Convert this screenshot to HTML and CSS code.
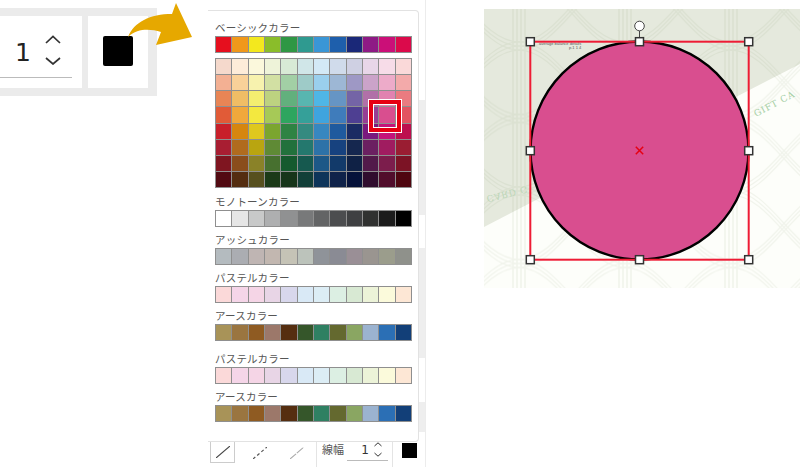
FILE: index.html
```html
<!DOCTYPE html>
<html lang="ja">
<head>
  <meta charset="UTF-8">
  <title>カラーパレット</title>
  <link rel="stylesheet" href="styles.css">
</head>
<body>
  <div class="figure">
    <div class="toolbar-col">
      <div class="toolbar-crop">
        <div class="crop-cell width-cell">
          <span class="width-value">1</span>
          <svg class="stepper" width="16" height="30" viewBox="0 0 16 30">
            <path d="M1 8 L8 1.5 L15 8 M1 23 L8 29 L15 23" fill="none" stroke="#333" stroke-width="1.7"/>
          </svg>
        </div>
        <div class="crop-cell color-cell">
          <div class="color-chip"></div>
        </div>
      </div>
    </div>

    <svg class="arrow" width="70" height="50" viewBox="125 0 70 50">
      <path d="M128 37 C134 22 150 14 172 14 L176 3 L192 37 L156 45 L161 32 C150 29 138 28 128 37 Z" fill="#e6a800"/>
    </svg>

    <div class="panel-col">
      <div class="panel">
        <div class="group">
          <div class="group-label">ベーシックカラー</div>
          <div class="swatches" data-palette="basic"></div>
        </div>
        <div class="swatch-grid" data-palette="tones">
          <div class="picked"></div>
        </div>
        <div class="group">
          <div class="group-label">モノトーンカラー</div>
          <div class="swatches" data-palette="mono"></div>
        </div>
        <div class="group">
          <div class="group-label">アッシュカラー</div>
          <div class="swatches" data-palette="ash"></div>
        </div>
        <div class="group">
          <div class="group-label">パステルカラー</div>
          <div class="swatches" data-palette="pastel"></div>
        </div>
        <div class="group">
          <div class="group-label">アースカラー</div>
          <div class="swatches" data-palette="earth"></div>
        </div>
        <div class="group group-split">
          <div class="group-label">パステルカラー</div>
          <div class="swatches" data-palette="pastel"></div>
        </div>
        <div class="group">
          <div class="group-label">アースカラー</div>
          <div class="swatches" data-palette="earth"></div>
        </div>
      </div>

      <div class="line-tools">
        <div class="line-btn active">
          <svg width="14" height="12" viewBox="0 0 14 12"><path d="M0 12 L14 0" stroke="#444" stroke-width="1.1"/></svg>
        </div>
        <div class="line-btn">
          <svg width="14" height="12" viewBox="0 0 14 12"><path d="M0 12 L14 0" stroke="#555" stroke-width="1.2" stroke-dasharray="3 2.5"/></svg>
        </div>
        <div class="line-btn">
          <svg width="14" height="12" viewBox="0 0 14 12"><path d="M0 12 L14 0" stroke="#aaa" stroke-width="1.1" stroke-dasharray="8 1"/></svg>
        </div>
        <div class="line-width">
          <span class="line-width-label">線幅</span>
          <div class="line-width-input">
            <span class="line-width-value">1</span>
            <svg class="line-stepper" width="8" height="15" viewBox="0 0 8 15">
              <path d="M.5 4 L4 .8 L7.5 4 M.5 11 L4 14.2 L7.5 11" fill="none" stroke="#333" stroke-width="1"/>
            </svg>
          </div>
        </div>
        <div class="line-color"><div class="line-chip"></div></div>
      </div>
    </div>

    <div class="panel-side"></div>

    <svg class="canvas" width="316" height="279" viewBox="484 9 316 279">
      <defs>
        <g id="ribbon">
          <path d="M-20 0 H0 C40 0 66 72.5 106 72.5 H126 M-20 72.5 H0 C40 72.5 66 0 106 0 H126" fill="none" stroke="#748c58" stroke-width="1.2"/>
        </g>
        <g id="braid">
          <use href="#ribbon"/>
          <use href="#ribbon" y="-4"/>
          <use href="#ribbon" y="4"/>
        </g>
        <pattern id="guilloche" x="519" y="46" width="106" height="72.5" patternUnits="userSpaceOnUse">
          <use href="#braid"/>
          <use href="#braid" y="-72.5"/>
          <use href="#braid" y="72.5"/>
          <path d="M2 0 V72.5 M6 0 V72.5 M100 0 V72.5 M104 0 V72.5" fill="none" stroke="#748c58" stroke-width="1.6"/>
        </pattern>
      </defs>
      <rect x="484" y="9" width="316" height="279" fill="#fdfefa"/>
      <path d="M484 9 H800 V64 L484 227 Z" fill="#e5e9dd"/>
      <rect x="484" y="9" width="316" height="279" fill="url(#guilloche)" opacity=".09"/>

      <text class="gift-text" transform="translate(756 117) rotate(-28)">GIFT CA</text>
      <text class="gift-text gift-flipped" transform="translate(486 196) rotate(-14) scale(1 -1)">CARD G</text>
      <text class="fine-print" x="539" y="45">average balance details</text>
      <text class="fine-print" x="569" y="49">p.1 1 4</text>

      <circle cx="639.5" cy="150.5" r="109" fill="#d94e8f" stroke="#000" stroke-width="2.4"/>

      <rect x="530.3" y="41.7" width="218.4" height="218" fill="none" stroke="#ee1c35" stroke-width="2"/>
      <path d="M635.8 146.8 L643.2 154.2 M643.2 146.8 L635.8 154.2" stroke="#e60012" stroke-width="1.5"/>
      <path d="M639.5 31 V38" stroke="#444" stroke-width="1"/>
      <circle cx="639.5" cy="26" r="4.8" fill="#fff" stroke="#444" stroke-width="1"/>
      <g fill="#fff" stroke="#333" stroke-width="1.5">
        <rect x="526.3" y="37.7" width="8" height="8"/>
        <rect x="635.5" y="37.7" width="8" height="8"/>
        <rect x="744.7" y="37.7" width="8" height="8"/>
        <rect x="526.3" y="146.7" width="8" height="8"/>
        <rect x="744.7" y="146.7" width="8" height="8"/>
        <rect x="526.3" y="255.7" width="8" height="8"/>
        <rect x="635.5" y="255.7" width="8" height="8"/>
        <rect x="744.7" y="255.7" width="8" height="8"/>
      </g>
    </svg>
  </div>

  <script src="palette.js"></script>
</body>
</html>
```

FILE: styles.css
```css
body {
  margin: 0;
  background-color: white;
  font-family: "Noto Sans CJK JP", "Noto Sans", sans-serif;
}
.figure {
  position: relative;
  display: flex;
  align-items: flex-start;
  width: 800px;
  height: 467px;
  overflow: hidden;
}

/* cropped toolbar on the left */
.toolbar-col {
  width: 208px;
  padding-top: 8px;
  flex-shrink: 0;
}
.toolbar-crop {
  display: flex;
  gap: 6px;
  box-sizing: border-box;
  width: 157px;
  height: 88px;
  padding: 8px 9px 8px 0;
  background-color: #ebebeb;
}
.crop-cell {
  background-color: white;
}
.width-cell {
  position: relative;
  display: flex;
  align-items: center;
  gap: 14px;
  box-sizing: border-box;
  width: 82px;
  padding: 0 0 0 15px;
}
.width-cell::after {
  content: "";
  position: absolute;
  left: 0;
  bottom: 10px;
  width: 72px;
  height: 1px;
  background-color: #bbb;
}
.width-value {
  font-family: "DejaVu Sans", sans-serif;
  font-size: 25px;
  line-height: 1;
  color: #222;
}
.stepper {
  margin-top: -5px;
}
.color-cell {
  display: flex;
  align-items: center;
  justify-content: center;
  width: 60px;
  padding-bottom: 3px;
  box-sizing: border-box;
}
.color-chip {
  width: 30px;
  height: 30px;
  border-radius: 2px;
  background-color: black;
}

.arrow {
  position: absolute;
  left: 125px;
  top: 0;
}

/* color picker panel */
.panel-col {
  width: 211px;
  padding-top: 10px;
  flex-shrink: 0;
}
.panel {
  display: flex;
  flex-direction: column;
  gap: 6px;
  box-sizing: border-box;
  width: 211px;
  height: 432px;
  padding: 10px 7px 0;
  background-color: white;
  border: 1px solid #e2e2e2;
  border-left: 0;
  border-radius: 0 4px 4px 0;
}
.group-label {
  height: 14px;
  margin-bottom: 1px;
  font-size: 10.5px;
  letter-spacing: 0.2px;
  line-height: 14px;
  color: #555;
  white-space: nowrap;
}
.group-split {
  margin-top: 5px;
}
.swatches,
.swatch-grid {
  display: grid;
  grid-template-columns: repeat(12, 1fr);
  gap: 1px;
  box-sizing: border-box;
  width: 197px;
  padding: 1px;
  background-color: #8f8f8f;
}
.swatches {
  height: 17px;
}
.swatch-grid {
  position: relative;
  grid-template-rows: repeat(8, 1fr);
  height: 130px;
  margin: -1px 0 1px;
}
.picked {
  position: absolute;
  left: 153px;
  top: 41px;
  box-sizing: border-box;
  width: 34px;
  height: 34px;
  border: 5px solid #e60012;
  outline: 1px solid white;
  outline-offset: -1px;
  box-shadow: inset 0 0 0 1px white;
}

/* line settings under the panel */
.line-tools {
  display: flex;
  align-items: flex-start;
  height: 25px;
  padding-left: 2px;
}
.line-btn {
  display: flex;
  align-items: center;
  justify-content: center;
  box-sizing: border-box;
  width: 25px;
  height: 21px;
  margin-right: 12px;
  flex-shrink: 0;
}
.line-btn.active {
  border: 1px solid #ccc;
  border-top: 0;
}
.line-width {
  display: flex;
  box-sizing: border-box;
  width: 77px;
  height: 25px;
  margin-left: -5px;
  padding-left: 5px;
  border-left: 1px solid #e4e4e4;
  border-right: 1px solid #e4e4e4;
  flex-shrink: 0;
}
.line-width-label {
  width: 25px;
  font-size: 11px;
  line-height: 14px;
  color: #555;
}
.line-width-input {
  display: flex;
  align-items: center;
  justify-content: flex-end;
  gap: 5px;
  box-sizing: border-box;
  width: 41px;
  height: 19px;
  padding-right: 6px;
  border-bottom: 1px solid #bbb;
}
.line-width-value {
  margin-top: -3px;
  font-family: "DejaVu Sans", sans-serif;
  font-size: 12px;
  color: #333;
}
.line-stepper {
  margin-top: -4px;
}
.line-color {
  padding: 1px 0 0 9px;
}
.line-chip {
  width: 15px;
  height: 15px;
  background-color: black;
}

/* slice of the app visible right of the panel */
.panel-side {
  box-sizing: border-box;
  width: 7px;
  height: 467px;
  border-right: 1px solid #ececec;
  flex-shrink: 0;
  background: linear-gradient(to bottom,
    white 0 100px,
    #eeeeee 100px 215px,
    white 215px 248px,
    #eeeeee 248px 358px,
    white 358px 402px,
    #eeeeee 402px 432px,
    white 432px);
}

/* selected circle on the gift card image */
.canvas {
  margin: 9px 0 0 58px;
  flex-shrink: 0;
}
.gift-text {
  font-family: "DejaVu Serif", serif;
  font-size: 9px;
  letter-spacing: 0.8px;
  fill: #a5cfa5;
}
.gift-flipped {
  fill: #bcd6b8;
}
.fine-print {
  font-family: "Liberation Sans", sans-serif;
  font-size: 4px;
  fill: #555;
}
```

FILE: palette.js
```js
const palettes = {
  basic: ['#e60f1e', '#f0981a', '#f3e81e', '#8abd2a', '#2f9744', '#2f9a90', '#3a96d6', '#1e5fac', '#1a2878', '#8e1a85', '#cb0f78', '#db0a4b'],
  tones: [
    '#f5d9cc', '#fdecd9', '#fbf8dc', '#eef3d9', '#d8ead6', '#d0e6e8', '#d3e9f6', '#d0dbeb', '#cfd0e3', '#e8d6e8', '#f7dce8', '#fad9d9',
    '#f3b093', '#f9d199', '#f7f2ae', '#d2e0a3', '#a2cfa5', '#9ecbc8', '#9acfed', '#9db7d5', '#9e98c5', '#cba3c9', '#edabc9', '#f3aaaa',
    '#e88555', '#f0bd65', '#f4ee70', '#bdd280', '#62b07d', '#58b6b0', '#4fb6e6', '#6695c4', '#7464a6', '#b170a8', '#e182b0', '#ea7b80',
    '#e15b37', '#f0a83c', '#f3e83f', '#a6c957', '#2ea55f', '#35a099', '#3fa4de', '#3f7cbb', '#4e3f92', '#973e94', '#d94e8f', '#e35461',
    '#c8202a', '#d6860f', '#dfc81e', '#7ba52f', '#2e8343', '#348a80', '#3787c0', '#1f5a9e', '#1a2b63', '#7a1a7e', '#c4137a', '#bd0f4e',
    '#a81e32', '#b06b1e', '#b9a510', '#5f8a35', '#22713c', '#24786e', '#2d72a8', '#17427f', '#15274f', '#6b2061', '#a01c60', '#9a1d32',
    '#7f1520', '#8a4d1c', '#8a8228', '#47702f', '#155a2e', '#16594f', '#1d5887', '#123a6a', '#0f2145', '#521a4a', '#7c1d4c', '#7c1325',
    '#520a12', '#542d10', '#57501f', '#1b3a18', '#17351a', '#123f38', '#0e355a', '#10234a', '#06123a', '#300d2e', '#520e2c', '#4f0610'
  ],
  mono: ['#ffffff', '#e6e6e6', '#c8c9c9', '#aeafb0', '#909192', '#78797a', '#636465', '#4c4d4f', '#3f4042', '#303130', '#1c1c1c', '#000000'],
  ash: ['#b4bbbf', '#abadb2', '#bfb5b3', '#c2b7b0', '#c5c3b6', '#bcc3bb', '#8f9399', '#8a8b94', '#9a8f96', '#9a9590', '#9b9d8c', '#8f918b'],
  pastel: ['#fbd9d9', '#f5d5e8', '#f5d5e6', '#e8d5e6', '#d8d7ec', '#d9e9f6', '#dcedf5', '#dcefe3', '#d8e9d3', '#ecf3d8', '#fbfadb', '#fde7d5'],
  earth: ['#a89358', '#9a7540', '#8f5b22', '#9c786a', '#552e10', '#35562a', '#2f8062', '#64692f', '#8aa662', '#9bb3d0', '#2b6fb5', '#123f78']
};

document.querySelectorAll('[data-palette]').forEach(function(row) {
  const first = row.firstElementChild;
  palettes[row.dataset.palette].forEach(function(color) {
    const cell = document.createElement('div');
    cell.style.backgroundColor = color;
    row.insertBefore(cell, first);
  });
});
```
